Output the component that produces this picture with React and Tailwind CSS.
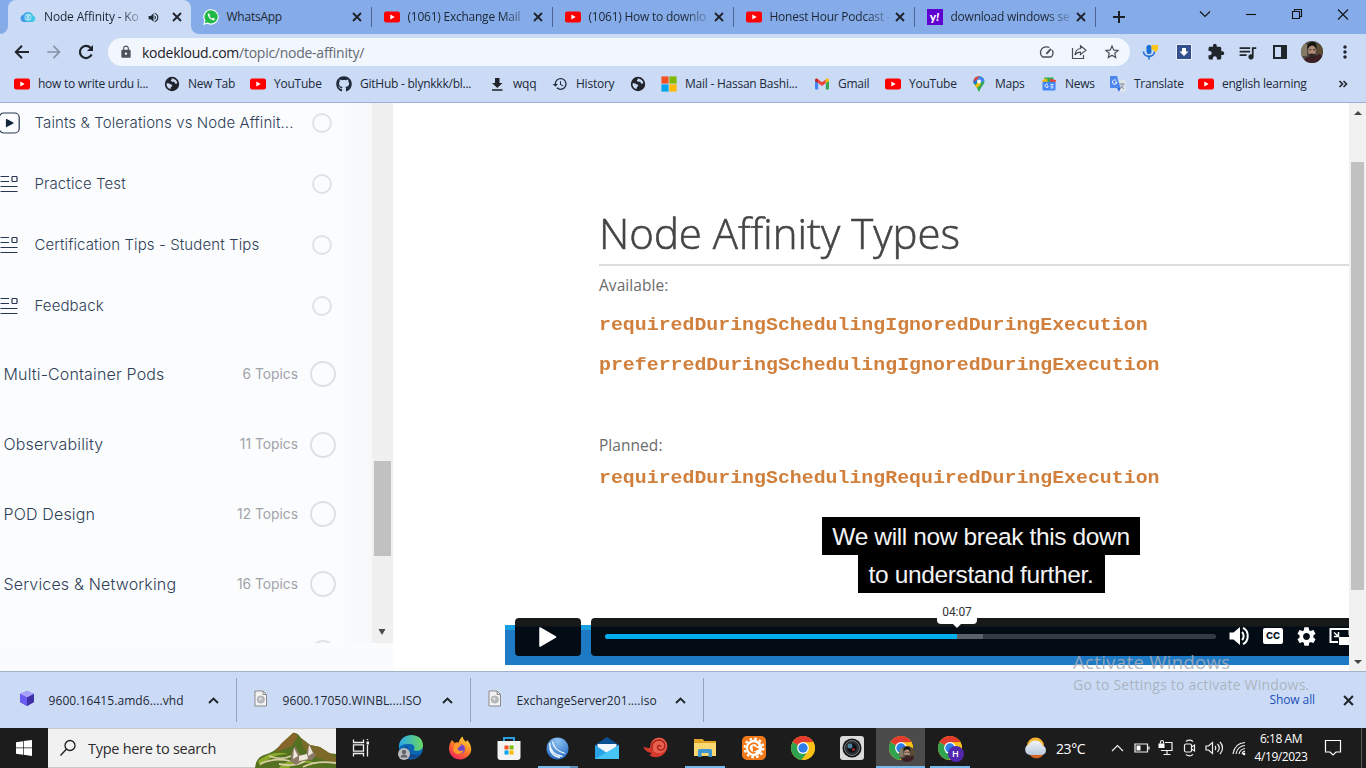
import React from "react";
import {
  MdArrowForward, MdLock, MdExtension, MdQueueMusic,
  MdMoreVert, MdStarOutline, MdHistory, MdVolumeUp, MdSettings,
} from "react-icons/md";
import { FaGithub } from "react-icons/fa";

/* ---------- browser icons ---------- */
const Close = ({ size = 10, className = "" }) => (
  <svg width={size} height={size} viewBox="0 0 10 10" className={"shrink-0 " + className} fill="none" stroke="#20242b" strokeWidth="1.900"><path d="M1 1l8 8M9 1L1 9" /></svg>
);
const Chevron = () => (
  <svg width="11" height="7" viewBox="0 0 11 7" className="ml-auto" fill="none" stroke="#20242b" strokeWidth="1.900"><path d="M1 6l4.500-4.500L10 6" /></svg>
);
const Back = () => (
  <svg width="20" height="20" viewBox="0 0 20 20" fill="none" stroke="#20242b" strokeWidth="2"><path d="M17 10H4.500M10 3.800L3.800 10l6.200 6.200" /></svg>
);
const Reload = () => (
  <svg width="20" height="20" viewBox="0 0 20 20" fill="none" stroke="#20242b" strokeWidth="2.200"><path d="M15.600 12.500A6.100 6.100 0 1 1 14.500 5.800l1.500 1.600" /><path d="M17 3v6h-6z" fill="#20242b" stroke="none" /></svg>
);
const YouTube = () => (
  <svg width="16" height="16" viewBox="0 0 16 16" className="shrink-0">
    <rect y="2.500" width="16" height="11" rx="2.200" fill="#f00" />
    <path d="M6.300 5.400v5.200l4.400-2.600z" fill="#fff" />
  </svg>
);
const Kode = () => (
  <svg width="16" height="16" viewBox="0 0 16 16" className="shrink-0">
    <defs>
      <linearGradient id="kk" x1="0" x2="1"><stop offset="0" stopColor="#3f8fe8" /><stop offset="1" stopColor="#3fd5e4" /></linearGradient>
    </defs>
    <path d="M4 13a3.700 3.700 0 0 1-.8-7.200A5.400 5.400 0 0 1 13 6.400 3.400 3.400 0 0 1 12.600 13z" fill="url(#kk)" />
    <circle cx="8" cy="8.300" r="3.500" fill="#a5e3f4" />
    <path d="M7 6.800L5.600 8.300 7 9.800M9 6.800l1.400 1.500L9 9.800" stroke="#4ba8df" fill="none" />
  </svg>
);
const WhatsApp = () => (
  <svg width="16" height="16" viewBox="0 0 16 16" className="shrink-0">
    <path d="M8.100 0.200a7.700 7.700 0 1 1-3.700 14.500L0.200 15.900l1.200-4.100A7.700 7.700 0 0 1 8.100 0.200z" fill="#fff" />
    <path d="M8.100 1.300a6.600 6.600 0 1 1-3.500 12.200L1.800 14.300l.8-2.700A6.600 6.600 0 0 1 8.100 1.300z" fill="#1fb846" />
    <path d="M5.800 4.200c-.9.400-1.300 1.300-.9 2.400.7 2.200 2.600 4.200 5 4.700 1.100.2 2-.5 2.100-1.500l-1.900-1-1 .9C7.900 9.200 7 8.300 6.500 7.100l.7-.9z" fill="#fff" />
  </svg>
);
const Yahoo = () => (
  <span className="flex h-4 w-4 shrink-0 items-center justify-center bg-[#5f01d1] pb-px font-['Lato'] text-[12px] leading-none font-black text-white">y<i>!</i></span>
);
const Globe = () => (
  <svg width="16" height="16" viewBox="0 0 16 16" className="shrink-0">
    <circle cx="8" cy="8" r="7.200" fill="#202329" />
    <path d="M2.500 7.500c1.500-.5 3-.2 4 .8.600.6 1.700.3 1.800 1.200.1 1-1.300 1-1.500 2-.1.700-.1 1.500-.6 1.600C3.800 12.300 2.300 10 2.500 7.500zM7.200 2.500c1 .3.600 1.300-.2 1.700-.5.400.2 1 .8 1.400.7.500 1.900-.2 2.600.4.700.6 0 1.300 1 1.700.8.200 1.300-.2 1.900-.4-.1-2.500-2.500-5-6.100-4.800z" fill="#cbdbf6" />
  </svg>
);
const DownBar = () => (
  <svg width="16" height="16" viewBox="0 0 16 16" className="shrink-0"><path d="M6 2h4.500v5h3l-5.200 5L3 7h3zM3 13.200h10.500v1.600H3z" fill="#202329" /></svg>
);
const Ms = () => (
  <svg width="16" height="16" viewBox="0 0 16 16" className="shrink-0">
    <path d="M.4.400h7.200v7.200H.4z" fill="#f25022" /><path d="M8.400.400h7.200v7.200H8.400z" fill="#7fba00" />
    <path d="M.4 8.400h7.200v7.200H.4z" fill="#00a4ef" /><path d="M8.400 8.400h7.200v7.200H8.400z" fill="#ffb900" />
  </svg>
);
const Gmail = () => (
  <svg width="16" height="16" viewBox="0 0 16 16" className="shrink-0">
    <path d="M1 4.500l3.200 2.400V13.500H2a1 1 0 0 1-1-1z" fill="#4285f4" />
    <path d="M15 4.500l-3.200 2.400V13.500H14a1 1 0 0 0 1-1z" fill="#34a853" />
    <path d="M4.200 3.400L8 6.300l3.800-2.900v3.700L8 10 4.200 7.100z" fill="#ea4335" />
    <path d="M1 5V4c0-1.500 1.600-2 2.700-1.100l.5.400v3.900z" fill="#c5221f" />
    <path d="M15 5V4c0-1.500-1.600-2-2.700-1.100l-.5.400v3.900z" fill="#fbbc04" />
  </svg>
);
const Maps = () => (
  <svg width="16" height="16" viewBox="0 0 16 16" className="shrink-0">
    <defs><clipPath id="pin"><path d="M8 .3a5.400 5.400 0 0 1 5.500 5.400c0 3-3.600 4.600-4.700 9-.2 1.100-1.400 1.100-1.600 0C6.100 10.300 2.500 8.700 2.500 5.700A5.400 5.400 0 0 1 8 .3z" /></clipPath></defs>
    <g clipPath="url(#pin)">
      <path d="M0 0h16v16H0z" fill="#34a853" />
      <path d="M0 10.500L13 -3 0 -3z" fill="#ea4335" />
      <path d="M5.500 3L9 -1h7l0 3-5.500 5z" fill="#4285f4" />
      <path d="M2 11l6-5 2 2-6 6z" fill="#fbbc04" />
      <path d="M0 4l4-2 3 3-5 5z" fill="#1a73e8" />
      <path d="M2 4.500L6 .5 8 1 4.500 5z" fill="#ea4335" />
    </g>
    <circle cx="8" cy="5.600" r="2" fill="#fff" />
  </svg>
);
const News = () => (
  <svg width="16" height="16" viewBox="0 0 16 16" className="shrink-0">
    <path d="M3.500 1.500h9v5h-9z" fill="#34a853" /><path d="M1 4l5-1.500L7 7H2z" fill="#fbbc04" /><path d="M9 3l6 1-1 4H9z" fill="#ea4335" />
    <rect x="1.500" y="5.800" width="13" height="8.700" rx="1" fill="#4285f4" />
    <path d="M7 8.700a1.700 1.700 0 1 0 .3 1.600H5.800M9.500 8.500h3M9.500 10.200h3M9.500 11.900h3" stroke="#fff" fill="none" strokeWidth=".9" />
  </svg>
);
const Translate = () => (
  <svg width="16" height="16" viewBox="0 0 16 16" className="shrink-0">
    <path d="M6 4h9a1 1 0 0 1 1 1v10a1 1 0 0 1-1 1H9z" fill="#dfe3ea" />
    <path d="M9.500 8h5M12 7v1M13.500 8c-.5 2-1.800 3.500-3.500 4.500M10.500 9.500c.8 1.500 2 2.500 3.500 3.200" stroke="#7c8797" fill="none" strokeWidth=".9" />
    <path d="M1 0h6l3.500 12H1a1 1 0 0 1-1-1V1a1 1 0 0 1 1-1z" fill="#4a86ee" />
    <path d="M6.300 4.600a2.200 2.200 0 1 0 .6 1.700H4.900" stroke="#fff" fill="none" strokeWidth="1" />
    <path d="M7 12h3.500L9 16z" fill="#3367d6" />
  </svg>
);
const Gauge = () => (
  <svg width="16" height="16" viewBox="0 0 16 16" fill="none" stroke="#4a4e55" strokeWidth="1.300">
    <path d="M4.600 13A5.800 5.800 0 0 1 8.500 2.800c1 0 2 .2 2.800.7M14.300 6c1 2.300.8 4.800-.7 6.600a1.500 1.500 0 0 1-1 .4H4.600" /><path d="M8.400 9.800l4.600-5" strokeWidth="1.900" />
  </svg>
);
const Share = () => (
  <svg width="16" height="16" viewBox="0 0 16 16" fill="none" stroke="#4a4e55" strokeWidth="1.200">
    <path d="M1.500 4v10.500h11V11" /><path d="M9.500 1.800l5.500 4.500-5.500 4.300V8.200C7 8.200 5.200 9 4 11c.2-3.500 2-6 5.500-6.500z" />
  </svg>
);

/* ---------- profile portrait ---------- */
const Face = ({ size }) => (
  <svg width={size} height={size} viewBox="0 0 22 22" className="shrink-0 rounded-full">
    <path d="M0 0h22v22H0z" fill="#4d4a44" /><path d="M0 3h6v12H0z" fill="#857a65" /><path d="M16 3h6v10h-6z" fill="#5d4a33" />
    <path d="M2 22c1-5 5-7 8-6l9-3 3 3v6z" fill="#3d2026" />
    <ellipse cx="11" cy="10" rx="3.800" ry="5.800" fill="#b08b76" />
    <path d="M6.500 8c-1-5 2-7 5-7S16 3 15.300 8c-1-2.500-2-3.500-4-3.500S7.500 5.500 6.500 8z" fill="#16130f" />
    <path d="M7.500 11.500c.5 2.500 1.500 1 3.500 1s3 1.500 3.500-1c0 4-1.500 5.500-3.300 5.500S7.800 15.500 7.500 11.500z" fill="#33261f" />
    <path d="M8.300 8.800h2M12 8.800h2" stroke="#2a201b" />
  </svg>
);

const tabs = [
  { icon: <WhatsApp />, text: "WhatsApp" },
  { icon: <YouTube />, text: "(1061) Exchange Mail" },
  { icon: <YouTube />, text: "(1061) How to downlo" },
  { icon: <YouTube />, text: "Honest Hour Podcast -" },
  { icon: <Yahoo />, text: "download windows se" },
];

const TabStrip = () => (
  <div className="flex h-[34px] items-start bg-[#85ace9] text-[#1d2633]">
    <div className="flex h-[34px] w-2 items-end bg-[#cbdbf6]"><div className="h-full w-full rounded-br-lg bg-[#85ace9]" /></div>
    <div className="flex h-[34px] w-[183px] items-center rounded-t-lg bg-[#cbdbf6] pl-3">
      <Kode />
      <span className="ml-2 w-[97px] [mask-image:linear-gradient(to_right,#000_80%,#0003)] text-[12px] tracking-[-0.16px] whitespace-nowrap">Node Affinity - Ko</span>
      <MdVolumeUp className="ml-[6px] shrink-0" size={13} />
      <Close className="ml-[12px]" />
    </div>
    {tabs.map((t, i) => (
      <div key={i} className="flex h-[34px] w-[181px] bg-[#cbdbf6]">
        <div className={"flex h-full w-full items-center bg-[#85ace9] pl-[11.500px] " + (i === 0 ? "rounded-bl-lg" : "")}>
          {t.icon}
          <span className={"ml-[8px] w-[119px] text-[12px] tracking-[-0.24px] whitespace-nowrap " + (i === 0 ? "" : "[mask-image:linear-gradient(to_right,#000_80%,#0003)]")}>{t.text}</span>
          <Close className="ml-[6.500px]" />
          <span className="ml-auto h-5 w-px bg-[#4c6695]" />
        </div>
      </div>
    ))}
    <div className="flex h-[34px] flex-1 items-center pl-[17px]">
      <svg width="12" height="12" viewBox="0 0 12 12" stroke="#1a1e25" strokeWidth="2"><path d="M6 0v12M0 6h12" /></svg>
      <svg className="mb-1.5 ml-[72px]" width="160" height="14" viewBox="0 0 160 14" fill="none" stroke="#111" strokeWidth="1.100">
        <path d="M3 4.500L8 9.500 13 4.500" /><path d="M49 7.500h10" />
        <path d="M95.500 4.500h7v7h-7zM97.500 4.500v-2h7v7h-2" /><path d="M141 2.500l10 10M151 2.500l-10 10" />
      </svg>
    </div>
  </div>
);

const Toolbar = () => (
  <div className="flex h-9 items-center bg-[#cbdbf6] text-[#20242b]">
    <div className="flex w-[108px] items-center gap-[12px] pl-3">
      <Back />
      <MdArrowForward size={20} className="text-[#8792a6]" />
      <Reload />
    </div>
    <div className="flex h-7 w-[1022px] items-center rounded-full bg-[#f2f6fd] pr-[9px]">
      <MdLock className="ml-[11px] text-[#4e535b]" size={14} />
      <span className="ml-[9px] text-[14px] tracking-[-0.26px] text-[#1d2128]">kodekloud.com<span className="text-[#646a74]">/topic/node-affinity/</span></span>
      <div className="ml-auto flex items-center gap-[15px]"><Gauge /><span className="flex pr-px pl-[2px]"><Share /></span><MdStarOutline size={18} className="text-[#4a4e55]" /></div>
    </div>
    <div className="flex flex-1 items-center pl-3">
      <svg width="16" height="16" viewBox="0 0 16 16"><rect x="4.500" y="1" width="5" height="9" rx="2.200" fill="#1a6fd6" /><path d="M1.500 7.500c0 6.500 11 6.500 11 0M7 12v3.500" stroke="#1a6fd6" strokeWidth="1.600" fill="none" /><path d="M9.500 1H16v5l-3 2.500-1-2.500H9.500z" fill="#ffc61a" /></svg>
      <svg className="ml-[18px]" width="16" height="16" viewBox="0 0 16 16"><path d="M0 0h16v16H0z" fill="#e8eefa" /><path d="M1 1h14v14H1z" fill="#33508f" /><path d="M6 4h4v3.500h2.500L8 12 3.500 7.500H6z" fill="#fff" /></svg>
      <MdExtension className="ml-[15px]" size={18} />
      <MdQueueMusic className="ml-[12px]" size={21} />
      <svg className="ml-[14px]" width="16" height="16" viewBox="0 0 16 16"><path d="M2 2h12v12H2z" stroke="#20242b" strokeWidth="2" fill="none" /><path d="M9 2h5v12H9z" fill="#20242b" /></svg>
      <span className="ml-[13px] flex"><Face size={22} /></span>
      <MdMoreVert className="ml-[12px]" size={20} />
    </div>
  </div>
);

const marks = [
  [<YouTube />, "how to write urdu i...", "w-[150px]"],
  [<Globe />, "New Tab", "w-[86px]"],
  [<YouTube />, "YouTube", "w-[86px]"],
  [<FaGithub size={16} className="shrink-0" />, "GitHub - blynkkk/bl...", "w-[153px]"],
  [<DownBar />, "wqq", "w-[63px]"],
  [<MdHistory size={16} className="shrink-0" />, "History", "w-[78px]"],
  [<Globe />, "", "w-[31px]"],
  [<Ms />, "Mail - Hassan Bashi...", "w-[153px]"],
  [<Gmail />, "Gmail", "w-[71px]"],
  [<YouTube />, "YouTube", "w-[86px]"],
  [<Maps />, "Maps", "w-[70px]"],
  [<News />, "News", "w-[69px]"],
  [<Translate />, "Translate", "w-[88px]"],
  [<YouTube />, "english learning", "w-[140px]"],
];

const Bookmarks = () => (
  <div className="flex h-[33px] items-center border-b border-[#9db0cf] bg-[#cbdbf6] pb-1 pl-[14px] text-[12px] tracking-[-0.24px] text-[#20293a]">
    {marks.map(([icon, text, w], i) => (
      <div key={i} className={"flex shrink-0 items-center gap-2 whitespace-nowrap " + w}>{icon}<span>{text}</span></div>
    ))}
    <svg width="10" height="10" viewBox="0 0 10 10" fill="none" stroke="#20242b" strokeWidth="1.600"><path d="M1.500 2l3 3-3 3M5.500 2l3 3-3 3" /></svg>
  </div>
);

/* ---------- course sidebar ---------- */
const ListIcon = () => (
  <svg width="20" height="20" viewBox="0 0 20 20" fill="none" stroke="#26364f" strokeWidth="1.200">
    <path d="M0.500 2.500h8.500M0.500 7.500h8.500M0.500 12.500h17M0.500 17.500h17" /><rect x="12" y="2.500" width="5" height="5" rx="0.800" />
  </svg>
);
const PlayIcon = () => (
  <svg width="20" height="22" viewBox="0 0 20 22" fill="none" stroke="#26364f" strokeWidth="1.200">
    <rect x="-0.800" y="1" width="20" height="20" rx="4.500" /><path d="M6.500 7.500l6.500 3.500-6.500 3.500z" fill="#14243c" stroke="#14243c" strokeLinejoin="round" />
  </svg>
);
const topics = [
  [<PlayIcon />, "Taints & Tolerations vs Node Affinit...", "h-[40px]"],
  [<ListIcon />, "Practice Test", "h-[82px]"],
  [<ListIcon />, "Certification Tips - Student Tips", "h-[40px]"],
  [<ListIcon />, "Feedback", "h-[81px]"],
];
const sections = [
  ["Multi-Container Pods", "6 Topics", "h-[56px]"],
  ["Observability", "11 Topics", "h-[85px]"],
  ["POD Design", "12 Topics", "h-[54px]"],
  ["Services & Networking", "16 Topics", "h-[86px]"],
  ["", "", "h-[52px]"],
];
const Sidebar = () => (
  <div className="h-[568px] w-[393px] bg-[#fafbfd]">
    <div className="flex h-[540px] font-['Inter',sans-serif] text-[#2f3f58]">
      <div className="h-full w-[372px] overflow-hidden bg-gradient-to-r from-[#fbfcfe] from-90% to-[#f7f8fa]">
        {topics.map(([icon, t, h], i) => (
          <div key={i} className={"flex items-center " + h}>
            <span className="flex w-[34.500px]">{icon}</span>
            <span className="w-[277.500px] pt-px text-[15px] font-[350] tracking-[0.1px] whitespace-nowrap">{t}</span>
            <span className="h-5 w-5 rounded-full border-2 border-[#e1e2e4]" />
          </div>
        ))}
        {sections.map(([t, n, h], i) => (
          <div key={i} className={"flex items-center pl-[3.500px] " + h}>
            <span className="w-[194.500px] pb-px text-[16px] font-[350] tracking-[0.16px] whitespace-nowrap">{t}</span>
            <span className="w-[100px] text-right text-[13.800px] text-[#a0a3a8]">{n}</span>
            <span className="ml-3 h-[26px] w-[26px] rounded-full border-2 border-[#dfe0e2]" />
          </div>
        ))}
      </div>
      <div className="flex h-full w-[21px] flex-col items-center bg-[#f0f0f0] pt-[358px]">
        <div className="h-[95px] w-[17px] bg-[#c1c1c1]" />
        <svg className="mt-auto mr-[2px] mb-2" width="8" height="6" viewBox="0 0 8 6"><path d="M0.500 0h7L4 6z" fill="#4a4a4a" /></svg>
      </div>
    </div>
  </div>
);

/* ---------- lesson video ---------- */
const Code = ({ children }) => (
  <div className="w-max origin-left scale-x-[1.104] font-['Liberation_Mono',monospace] text-[18px] leading-[24px] font-bold whitespace-nowrap text-[#d0803c]">{children}</div>
);
const Player = () => (
  <div className="absolute bottom-[6px] left-[112px] flex h-[48px] w-[844px] flex-col overflow-hidden">
    <div className="mt-2 h-[5px] shrink-0 bg-[#1b9fe3]" />
    <div className="h-[35px] shrink-0 bg-[#1f7ac6]" />
    <div className="absolute top-[0.500px] left-[10px] flex gap-[10px]">
      <div className="flex h-[38px] w-[66px] items-center justify-center rounded bg-gradient-to-b from-[#171a19] from-20% to-[#030b14] to-25%">
        <svg width="18" height="20" viewBox="0 0 18 20"><path d="M1 1l15.500 9L1 19z" fill="#fff" stroke="#fff" strokeLinejoin="round" strokeWidth="1.500" /></svg>
      </div>
      <div className="flex h-[38px] w-[780px] shrink-0 items-center rounded bg-gradient-to-b from-[#171a19] from-20% to-[#030b14] to-25% pb-px pl-[14px]">
        <div className="flex h-[5px] w-[611px] overflow-hidden rounded-full bg-[#343a43]">
          <div className="w-[352px] bg-[#00adef]" /><div className="w-[26px] bg-[#5c6169]" />
        </div>
        <svg className="ml-[12px]" width="24" height="22" viewBox="0 0 24 22"><path d="M1.500 7.500h4L12 2v18l-6.500-5.500h-4z" fill="#fff" /><path d="M14 7c2.200 2 2.200 6 0 8M15 2.800c6.300 3 6.300 13.400 0 16.400" stroke="#fff" strokeWidth="2" fill="none" /></svg>
        <span className="ml-[11px] flex h-[16px] w-5 items-center justify-center rounded-[2px] bg-white font-['Inter'] text-[9.500px] leading-none font-extrabold text-[#0b131c]">CC</span>
        <MdSettings className="ml-[12px] text-white" size={23} />
        <svg className="ml-[11px]" width="24" height="18" viewBox="0 0 24 18" fill="none" stroke="#fff" strokeWidth="2"><path d="M9 15H1.500V2h19v6" /><path d="M5 5.500l4 3.500M9.500 5v4.500H5" strokeWidth="1.500" /><path d="M10 10h13v8H10z" fill="#fff" stroke="none" /></svg>
      </div>
    </div>
  </div>
);
const Label = ({ children }) => (
  <div className="h-[22px] w-max font-['Open_Sans',sans-serif] text-[15.500px] leading-[22px] tracking-[0.05px] text-[#6c6c6c]">{children}</div>
);
const Lesson = () => (
  <div className="relative h-[568px] w-[956px] overflow-hidden bg-white pt-[104px] pl-[206px]">
    <h1 className="h-[57px] w-max origin-left scale-x-[0.976] font-['Open_Sans',sans-serif] text-[43px] leading-[52px] font-light whitespace-nowrap text-[#454545] [-webkit-text-stroke:0.6px_#454545]">Node Affinity Types</h1>
    <div className="h-[2px] bg-[#dcdcdc]" />
    <div className="mt-[8px]"><Label>Available:</Label></div>
    <div className="mt-[17px]"><Code>requiredDuringSchedulingIgnoredDuringExecution</Code></div>
    <div className="mt-[16px]"><Code>preferredDuringSchedulingIgnoredDuringExecution</Code></div>
    <div className="mt-[57px]"><Label>Planned:</Label></div>
    <div className="mt-[10px]"><Code>requiredDuringSchedulingRequiredDuringExecution</Code></div>
    <div className="absolute top-[414px] left-[428.500px] flex w-[319px] flex-col items-center font-['Liberation_Sans',sans-serif] text-[24.500px] tracking-[-0.37px] text-[#f4f4f4]">
      <div className="flex h-[38px] w-[318px] items-center justify-center bg-black pt-[3px] whitespace-nowrap">We will now break this down</div>
      <div className="flex h-[38px] w-[247px] items-center justify-center bg-black pt-[3px] whitespace-nowrap">to understand further.</div>
    </div>
    <Player />
    <div className="absolute top-[497px] left-[544px] flex flex-col items-center">
      <div className="flex h-[24px] w-[40px] items-center justify-center rounded bg-white pb-px font-['Roboto',sans-serif] text-[12px] tracking-[-0.1px] text-[#333]">04:07</div>
      <svg width="8" height="4" viewBox="0 0 8 4"><path d="M0 0h8L4 4z" fill="#fff" /></svg>
    </div>
  </div>
);
const PageScroll = () => (
  <div className="flex h-[568px] w-[17px] flex-col items-center bg-[#f1f1f1] pt-[8px]">
    <svg width="8" height="4" viewBox="0 0 8 4"><path d="M0 4h8L4 0z" fill="#444" /></svg>
    <div className="mt-[47px] h-[428px] w-[13px] bg-[#c1c1c1]" />
    <svg className="mt-auto mb-[7px]" width="8" height="4" viewBox="0 0 8 4"><path d="M0 0h8L4 4z" fill="#444" /></svg>
  </div>
);

/* ---------- downloads shelf ---------- */
const Disc = () => (
  <svg width="16" height="18" viewBox="0 0 16 18"><path d="M2 1h8l3.500 3.500V16H2z" fill="#f2f2f2" stroke="#8a8a8a" /><path d="M10 1v3.500h3.500" fill="none" stroke="#8a8a8a" /><circle cx="7.800" cy="9.500" r="3.600" fill="#b9bcc0" stroke="#999" strokeWidth=".6" /><circle cx="7.200" cy="8.700" r="1.300" fill="#e2e2e2" /></svg>
);
const Cube = () => (
  <svg width="16" height="18" viewBox="0 0 16 18"><path d="M8 1l7 3v8l-7 4-7-4V4z" fill="#5348e0" /><path d="M8 1l7 3-7 3.500L1 4z" fill="#a9a2fb" /><path d="M8 7.500L15 4v8l-7 4z" fill="#4030a8" /><path d="M1 4l7 3.500V16l-7-4z" fill="#6a5cf2" /></svg>
);
const files = [
  [<Cube />, "9600.16415.amd6....vhd", "w-[237px]", "pl-[19px]", "w-[134px]"],
  [<Disc />, "9600.17050.WINBL....ISO", "w-[234px]", "pl-[16px]", "w-[141px]"],
  [<Disc />, "ExchangeServer201....iso", "w-[233px]", "pl-[16px]", "w-[140px]"],
];
const Shelf = () => (
  <div className="flex h-[57px] items-center border-t border-[#a3b1c9] bg-[#cbdbf6] text-[12px] text-[#1f2836]">
    {files.map(([icon, t, w, pl, tw], i) => (
      <div key={i} className={"flex h-11 items-center border-r border-[#90a3c4] pr-[17px] " + w + " " + pl}>
        <span className="flex pb-[2px]">{icon}</span><span className={"ml-[13.500px] pt-px whitespace-nowrap tracking-[0.08px] " + tw}>{t}</span>
        <Chevron />
      </div>
    ))}
    <span className="ml-auto pb-px text-[12px] font-medium tracking-[-0.1px] text-[#1c50b8]">Show all</span>
    <Close className="mr-[12px] ml-[28px]" size={11} />
  </div>
);

/* ---------- taskbar ---------- */
const Chrome = () => (
  <svg width="24" height="24" viewBox="0 0 24 24">
    <circle cx="12" cy="12" r="12" fill="#fbc116" />
    <path d="M12 12L1.600 6A12 12 0 0 0 10.500 23.900L17.200 15z" fill="#30a350" />
    <path d="M12 12L1.600 6A12 12 0 0 1 22.400 6L12 6.500z" fill="#e33b2e" />
    <path d="M12 6.500h10.600a12 12 0 0 1-11 17.500L17 15z" fill="#fbc116" />
    <circle cx="12" cy="12" r="5.900" fill="#fff" /><circle cx="12" cy="12" r="4.700" fill="#2f7de9" />
  </svg>
);
const apps = [
  [<svg width="26" height="26" viewBox="0 0 26 26"><defs><linearGradient id="ed" x1="0" x2="1"><stop offset="0" stopColor="#2aa8e8" /><stop offset="1" stopColor="#6ad861" /></linearGradient></defs><circle cx="13" cy="12.500" r="12" fill="#0d66b4" /><path d="M1 11C2-3.500 25-3.500 25 10.500c0 5-6 6.500-9.500 4.500 2-2 1-6-3.500-6-5 0-10 0-11 5z" fill="url(#ed)" /><path d="M9.500 11c-2 6 5 11 13 8-5 7-18 6-17-3 .4-3 2-4.500 4-5z" fill="#15478a" /><circle cx="6" cy="19" r="6" fill="#b9bdc0" /><circle cx="6" cy="17" r="2.200" fill="#606468" /><path d="M2.500 22.500c0-4 7-4 7 0z" fill="#606468" /></svg>, ""],
  [<svg width="24" height="24" viewBox="0 0 24 24"><defs><linearGradient id="ff" x1=".8" y1="0" x2=".2" y2="1"><stop offset="0" stopColor="#ffe03b" /><stop offset=".5" stopColor="#ff7a26" /><stop offset="1" stopColor="#ee1d62" /></linearGradient></defs><path d="M4 4l2.500 3C8 6 10 6 11 6.500 11 4 12.500 2 14.500.500c.5 3 2 3.500 3.500 5.500l1-2c3.500 3 5 8 3.800 12C19 26 3.500 26.500 1.200 14.500.5 10.500 2 6.500 4 4z" fill="url(#ff)" /><circle cx="12" cy="13" r="5" fill="#7147c8" /><path d="M6.500 8c3-1 6-.5 7.500 1.500-3 0-2.500 2-4.500 3 1 3 4 3 6 1.500-1 6-10 5-10.500-1z" fill="#ff9a2b" /></svg>, ""],
  [<svg width="24" height="24" viewBox="0 0 24 24"><path d="M7 6V2h10v4" stroke="#2b9fdd" strokeWidth="2" fill="none" /><path d="M.5 5h23v16a3 3 0 0 1-3 3h-17a3 3 0 0 1-3-3z" fill="#f3f3f3" /><path d="M7.500 9.500h4v4h-4z" fill="#f25022" /><path d="M12.500 9.500h4v4h-4z" fill="#7fba00" /><path d="M7.500 14.500h4v4h-4z" fill="#00a4ef" /><path d="M12.500 14.500h4v4h-4z" fill="#ffb900" /></svg>, ""],
  [<svg width="23" height="23" viewBox="0 0 23 23"><defs><radialGradient id="bl" cx=".5" cy=".15" r=".9"><stop offset="0" stopColor="#8ec2f2" /><stop offset="1" stopColor="#2269c0" /></radialGradient></defs><circle cx="11.500" cy="11.500" r="11" fill="url(#bl)" /><path d="M3.500 6c.5 7 5 12 13 13.500M6.500 4.500c1 6.500 5.500 10 12.500 12M3.500 10.500c1 5 5 9 10.500 10" stroke="#f0f7ff" strokeWidth="1.300" fill="none" /></svg>, "multi"],
  [<svg width="24" height="24" viewBox="0 0 24 24"><path d="M0 9l12-8 12 8v5H0z" fill="#0c4f93" /><path d="M2.500 8h19v9h-19z" fill="#f4f7fb" /><path d="M0 9l12 8L24 9v14H0z" fill="#28a3e8" /><path d="M24 9L0 23h24z" fill="#45c4f5" /></svg>, ""],
  [<svg width="25" height="22" viewBox="0 0 25 22"><path d="M0 10c3 0 5 1.500 7 1C7 3 13-.5 18 1c6.500 2 8 9 4.500 14-4 6-12 6.500-16 3L9 16c-4 0-7-3-9-6z" fill="#d6392b" /><circle cx="16" cy="8.500" r="7.800" fill="#e8604e" /><path d="M9.500 13c-2-6 1.500-10 7-10 5 .5 6.500 5.500 4.500 8.500-2 2.500-6.500 2-6.500-1.200 0-2 2.800-2.500 3.300-.5" fill="none" stroke="#a8231b" strokeWidth="1.400" /></svg>, ""],
  [<svg width="22" height="20" viewBox="0 0 22 20"><path d="M0 1h8.500l2 2H22v5H0z" fill="#e0a526" /><path d="M0 5h22v13H0z" fill="#fcd873" /><path d="M4 19v-6.500A1.500 1.500 0 0 1 5.500 11h11a1.500 1.500 0 0 1 1.500 1.500V19h-3.500v-4h-7v4z" fill="#3b96d2" /></svg>, "app"],
  [<svg width="24" height="24" viewBox="0 0 24 24"><rect width="24" height="24" rx="5" fill="#f27a1b" /><circle cx="12" cy="12" r="9.300" fill="none" stroke="#fff" strokeWidth="2.200" strokeDasharray="2.600 2.270" /><circle cx="12" cy="12" r="8.200" fill="#fff" /><path d="M13.500 16.500a4.800 4.800 0 1 1 2.500-6.500" stroke="#f27a1b" strokeWidth="1.800" fill="none" /><path d="M10.500 9.500l7 3.500-6.500 3z" fill="#f27a1b" /></svg>, ""],
  [<Chrome />, ""],
  [<svg width="24" height="24" viewBox="0 0 24 24"><rect width="24" height="24" rx="3" fill="#dadada" /><circle cx="12" cy="12" r="9.500" fill="#111" /><circle cx="12" cy="12" r="7.500" fill="#2b3036" stroke="#777" /><circle cx="12" cy="12" r="4.500" fill="#0a0d12" /><circle cx="10" cy="10" r="2.500" fill="#4d7f96" /><circle cx="13.500" cy="13.500" r="1.500" fill="#a72b2b" /></svg>, ""],
  [<span className="relative flex"><Chrome /><span className="absolute top-[10px] left-[10px] flex"><Face size={16} /></span></span>, "active"],
  [<span className="relative flex"><Chrome /><span className="absolute top-[10px] left-[10px] flex h-4 w-4 items-center justify-center rounded-full bg-[#5128ae] text-[9px] font-semibold text-white">H</span></span>, "app"],
];
const underline = { active: "w-full bg-[#76b9ed]", app: "w-10 bg-[#76b9ed]", multi: "w-10 border-r-8 border-[#5d8fb8] bg-[#76b9ed]", "": "w-0" };
const Taskbar = () => (
  <div className="flex h-10 bg-[#1c1c1c] text-white">
    <div className="flex w-12 items-center justify-center">
      <svg width="16" height="16" viewBox="0 0 16 16" fill="#fff"><path d="M0 2.200l7-1V7.600H0zM7.700 1.100L16 0v7.600H7.700zM0 8.300h7v6.500l-7-1zM7.700 8.300H16V16l-8.300-1.200z" /></svg>
    </div>
    <div className="flex h-10 w-[288px] items-center border-y border-[#c9c9c9] bg-[#f1f1f1] pl-[11px]">
      <svg width="18" height="18" viewBox="0 0 18 18" fill="none" stroke="#1c1c1c" strokeWidth="1.300"><circle cx="11" cy="6.500" r="5" /><path d="M7.300 10.200L1.500 16.500" /></svg>
      <span className="ml-[11px] pt-px text-[14.500px] tracking-[-0.28px] whitespace-nowrap text-[#2c2c2c]">Type here to search</span>
      <svg className="mt-[3px] ml-auto" width="81" height="36" viewBox="0 0 81 36">
        <path d="M0 36c1-8 4-12 12-14 6-2 10-5 15-11L38 1c3-1 6 2 8 5l9 7 10 2 8 6 8 1v14z" fill="#547021" />
        <path d="M27 11L38 1c2 0 4 1 5 3l-6 10-8 3-10 4z" fill="#86662a" /><path d="M46 6l9 7 10 2 16 10v6L62 26 48 16z" fill="#7d6a28" />
        <path d="M3 29c10-8 20-10 30-7-12 0-20 5-28 12zM24 36c8-10 24-10 40-4-14-2-25-2-30 4z" fill="#8cab2c" />
        <path d="M5 32c8-4 18-6 30-3M14 24c8 3 16 3 22 0M48 35c9-5 20-6 33-4M24 32c10 2 20 1 26-3" stroke="#d8cda4" strokeWidth="1.800" fill="none" />
        <path d="M35 29c2-5 1-10 5-15l5 9 6-1 3-10c3 4 4 9 7 11l-4 5-10 1-6 4z" fill="#8c7a68" /><path d="M39 16l4 8-5 3zM54 13l4 8-5 3zM44 24l8-2 1 5-9 2z" fill="#efe8dc" />
      </svg>
    </div>
    <div className="flex w-[50px] items-center justify-center">
      <svg className="mr-px" width="18" height="18" viewBox="0 0 18 18" fill="none" stroke="#eee" strokeWidth="1.300"><path d="M1.500 0.500v3h10v-3M1.500 17.500v-3h10v3M1.500 5.800h10v6.400h-10zM15.500 6v11.500M15.500 0v1" /><path d="M14.500 2.500h2.500v3h-2.500z" fill="#eee" stroke="none" /></svg>
    </div>
    {apps.map(([icon, state], i) => (
      <div key={i} className={"flex h-10 w-[49px] flex-col items-center " + (state === "active" ? "bg-[#4b4b4b]" : "")}>
        <div className="flex h-[38px] items-center pt-[2px]">{icon}</div>
        <div className={"h-[2px] " + underline[state]} />
      </div>
    ))}
    <div className="ml-auto flex items-center">
      <svg width="26" height="22" viewBox="0 0 26 22"><defs><linearGradient id="cl" x1="0" x2="0" y1="0" y2="1"><stop offset="0" stopColor="#f2f5fa" /><stop offset="1" stopColor="#b9c7dc" /></linearGradient></defs><circle cx="12.500" cy="9" r="8.500" fill="#f5b32f" /><path d="M7 18h13a8 8 0 0 1-13 0z" fill="#d4621f" /><path d="M6.500 18a5.500 5.500 0 0 1-.8-10.500A7.500 7.500 0 0 1 19.500 8.500 5 5 0 0 1 19.500 18z" fill="url(#cl)" /></svg>
      <span className="ml-[7px] w-[30px] text-[14px] tracking-[-0.4px]">23°C</span>
      <svg className="ml-[25px]" width="136" height="20" viewBox="0 0 136 20" fill="none" stroke="#f0f0f0" strokeWidth="1.200">
        <path d="M1 13l5.500-5.500L12 13" />
        <path d="M24 6h12.500v8H24zM38 8.500v3" /><path d="M25.500 7.500h4v5h-4z" fill="#fff" stroke="none" />
        <path d="M54 4.500h7v8H50M56 12.500v3.500M52.500 16.500h7M49.500 5.500V4a1.500 1.500 0 0 1 3 0v1.500" /><path d="M47.500 5.500h6V10h-6z" fill="#fff" stroke="none" />
        <rect x="73.500" y="6" width="7" height="8" rx="1.500" /><path d="M80.500 9l3-2v6l-3-2M75 3.500c2-1.500 5-1.500 7 0M75 16.500c2 1.500 5 1.500 7 0" />
        <path d="M95 8h2.500l4-3.500v11L97.500 12H95zM104 8c1 1 1 3 0 4M106.500 6c2.300 2.300 2.300 5.700 0 8M109 4c3.300 3.500 3.300 8.500 0 12" />
        <path d="M122 16C123 9 127 5 134 4.500M125 16c.8-5 4-8 9-8.500M128 16c.6-3 2.500-5 6-5.500M131 16c.3-1.500 1.500-2.500 3-2.800" /><circle cx="133" cy="16" r="1.300" fill="#fff" stroke="none" />
      </svg>
      <div className="ml-[5px] flex w-[58px] flex-col items-center text-[12px] leading-[18px] tracking-[-0.45px] whitespace-nowrap"><span>6:18 AM</span><span>4/19/2023</span></div>
      <svg className="ml-[14px]" width="18" height="18" viewBox="0 0 18 18" fill="none" stroke="#fff" strokeWidth="1.200"><path d="M1.500 1.500h15v11.500h-4.500l-3 3-3-3H1.500z" /></svg>
      <span className="mr-[4px] ml-[19px] h-10 w-px bg-[#5a5a5a]" />
    </div>
  </div>
);

export default function App() {
  return (
    <div className="relative flex h-[768px] w-[1366px] flex-col overflow-hidden bg-white font-['Open_Sans','Noto_Sans',sans-serif]">
      <TabStrip />
      <Toolbar />
      <Bookmarks />
      <div className="flex h-[568px]"><Sidebar /><Lesson /><PageScroll /></div>
      <Shelf />
      <Taskbar />
      <div className="absolute top-[649px] left-[1073px] flex flex-col whitespace-nowrap text-[#a5abb5]/85">
        <span className="text-[18.500px] leading-[26px] tracking-[0.35px]">Activate Windows</span>
        <span className="text-[14px] leading-[20px] tracking-[0.2px]">Go to Settings to activate Windows.</span>
      </div>
    </div>
  );
}
